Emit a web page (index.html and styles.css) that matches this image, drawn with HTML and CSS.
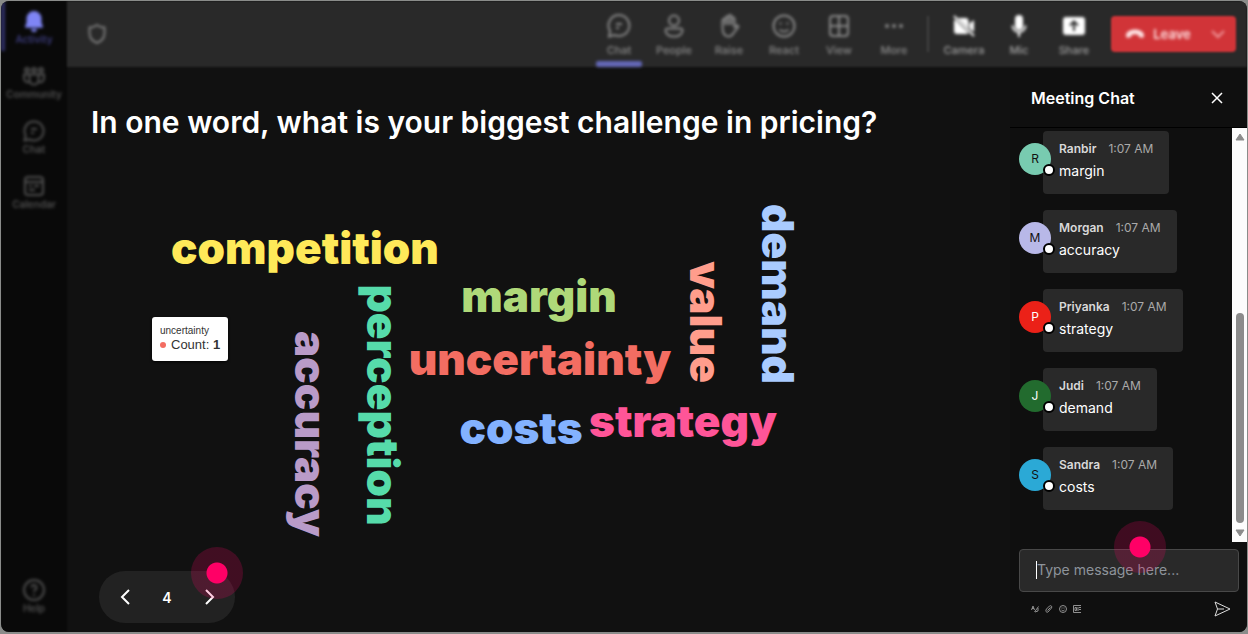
FILE: index.html
```html
<!DOCTYPE html>
<html lang="en">
<head>
    <meta charset="UTF-8">
    <meta name="viewport" content="width=device-width, initial-scale=1.0">
    <title>Meeting</title>
    <link rel="stylesheet" href="styles.css">
</head>
<body>
    <div class="app">
        <nav class="sidebar">
            <a href="#" class="nav-item active">
                <svg width="24" height="24" viewBox="0 0 24 24"><path d="M12 2a7.5 7.5 0 0 0-7.5 7.5v4.3L3 17.6c-.2.6.2 1.2.9 1.2h16.2c.7 0 1.1-.6.9-1.2l-1.5-3.8V9.5A7.5 7.5 0 0 0 12 2zM9 20a3 3 0 0 0 6 0z" fill="currentColor"/></svg>
                <span>Activity</span>
            </a>
            <a href="#" class="nav-item">
                <svg width="24" height="24" viewBox="0 0 24 24" fill="none" stroke="currentColor" stroke-width="2"><circle cx="5" cy="6" r="2"/><circle cx="12" cy="6" r="2"/><circle cx="19" cy="6" r="2"/><path d="M7.5 10.5h9V16a4.500 4.500 0 0 1-9 0zM7 10.500H2V14.500a4 4 0 0 0 5.500 3.500M17 10.500h5V14.500a4 4 0 0 1-5.500 3.500"/></svg>
                <span>Community</span>
            </a>
            <a href="#" class="nav-item">
                <svg width="24" height="24" viewBox="0 0 24 24" fill="none" stroke="currentColor" stroke-width="2"><path d="M12 2.5a9.5 9.5 0 1 1-4.400 17.900L2.500 21.500l1.100-5A9.500 9.500 0 0 1 12 2.500zM9 10h6M9 14h3"/></svg>
                <span>Chat</span>
            </a>
            <a href="#" class="nav-item">
                <svg width="24" height="24" viewBox="0 0 24 24" fill="none" stroke="currentColor" stroke-width="2"><rect x="3" y="3" width="18" height="18" rx="3"/><path d="M3 8h18M7 12h3M12 12h5M7 16h6"/></svg>
                <span>Calendar</span>
            </a>
            <a href="#" class="nav-item help">
                <svg width="24" height="24" viewBox="0 0 24 24" fill="none" stroke="currentColor" stroke-width="2"><circle cx="12" cy="12" r="10"/><path d="M9.500 9.500a2.500 2.500 0 1 1 3.500 2.300c-.7.400-1 .9-1 2.200M12 16v2"/></svg>
                <span>Help</span>
            </a>
        </nav>

        <header class="topbar">
            <svg class="shield" width="24" height="24" viewBox="0 0 24 24" fill="none" stroke="currentColor" stroke-width="2"><path d="M12 3c2 1.600 4.500 2.500 7.500 2.500V11c0 5-2.500 8-7.500 10-5-2-7.500-5-7.500-10V5.500C7.500 5.500 10 4.600 12 3z"/></svg>
            <div class="tools">
                <button type="button" class="tool selected">
                    <svg width="24" height="24" viewBox="0 0 24 24" fill="none" stroke="currentColor" stroke-width="2"><path d="M12 1a10.500 10.500 0 1 1-4.600 20L2 22.500l1.100-5.400A10.500 10.500 0 0 1 12 1zM9 10h6M9 14h3"/></svg>
                    Chat
                </button>
                <button type="button" class="tool">
                    <svg width="24" height="24" viewBox="0 0 24 24" fill="none" stroke="currentColor" stroke-width="2"><circle cx="12" cy="6.500" r="5"/><path d="M5.500 14.500h13a2 2 0 0 1 2 2c0 3.500-3.500 6-8.500 6s-8.500-2.500-8.500-6a2 2 0 0 1 2-2z"/></svg>
                    People
                </button>
                <button type="button" class="tool">
                    <svg width="24" height="24" viewBox="0 0 24 24" fill="none" stroke="currentColor" stroke-width="2"><path d="M5.500 13V6.500a1.500 1.500 0 0 1 3 0V4a1.500 1.500 0 0 1 3 0V2.500a1.500 1.500 0 0 1 3 0V5a1.500 1.500 0 0 1 3 0v8l2.500-1.500c1-.3 1.800.8 1 1.800L16.500 19c-1.300 2.500-2.500 3.500-5 3.500-4 0-6-3.500-6-9.500z"/><path d="M8.500 6v5M11.500 4v7M14.500 5v6"/></svg>
                    Raise
                </button>
                <button type="button" class="tool">
                    <svg width="24" height="24" viewBox="0 0 24 24" fill="none" stroke="currentColor" stroke-width="2"><circle cx="12" cy="12" r="10.500"/><path d="M7.500 15.500c2 2.500 7 2.500 9 0M8.500 8.500v2M15.500 8.500v2"/></svg>
                    React
                </button>
                <button type="button" class="tool">
                    <svg width="24" height="24" viewBox="0 0 24 24" fill="none" stroke="currentColor" stroke-width="2"><rect x="3" y="2" width="18" height="20" rx="3"/><path d="M12 2v20M3 12h18"/></svg>
                    View
                </button>
                <button type="button" class="tool">
                    <svg width="24" height="24" viewBox="0 0 24 24" fill="currentColor"><circle cx="5" cy="12" r="2"/><circle cx="12" cy="12" r="2"/><circle cx="19" cy="12" r="2"/></svg>
                    More
                </button>
            </div>
            <span class="divider"></span>
            <div class="tools devices">
                <button type="button" class="tool">
                    <svg width="24" height="24" viewBox="0 0 24 24" fill="currentColor"><path d="M6 4h7.500a3 3 0 0 1 3 3v7.500zM3 5.500L16.500 19a3 3 0 0 1-2 1H5a3 3 0 0 1-3-3V7c0-.6.400-1.200 1-1.500zM17.500 9.500l4.500-3.500v12l-4.500-3.500z"/><path d="M2 2l20 20" stroke="currentColor" stroke-width="2"/></svg>
                    Camera
                </button>
                <button type="button" class="tool">
                    <svg width="24" height="24" viewBox="0 0 24 24" fill="currentColor"><rect x="8" y="1" width="8" height="15" rx="4"/><path d="M5.500 11.500a6.500 6.500 0 0 0 13 0M12 18v5" fill="none" stroke="currentColor" stroke-width="2"/></svg>
                    Mic
                </button>
                <button type="button" class="tool">
                    <svg width="24" height="24" viewBox="0 0 24 24"><rect x="1" y="3" width="22" height="18" rx="3" fill="currentColor"/><path d="M12 17V8M8 11.500l4-4 4 4" fill="none" stroke="#292929" stroke-width="2"/></svg>
                    Share
                </button>
            </div>
            <button type="button" class="leave">
                <svg width="20" height="20" viewBox="0 0 20 20"><path d="M10 5.500c5 0 9.500 2.500 9 6.500-.2 1.500-1 2-2.300 1.700l-2-.5c-1-.3-1.200-1-1.200-2.200C11.500 10 8.500 10 6.500 11c0 1.200-.2 1.900-1.200 2.200l-2 .5C2 14 1.200 13.500 1 12c-.5-4 4-6.500 9-6.500z" fill="currentColor"/></svg>
                <span>Leave</span>
                <svg class="leave-more" width="14" height="14" viewBox="0 0 14 14" fill="none" stroke="currentColor" stroke-width="2"><path d="M1 4l6 6 6-6"/></svg>
            </button>
        </header>

        <main class="stage">
            <h1>In one word, what is your biggest challenge in pricing?</h1>
            <div class="cloud">
                <svg viewBox="0 0 943 400" preserveAspectRatio="xMinYMin meet">
                    <text x="238" y="94" fill="#ffe959">competition</text>
                    <text x="472" y="142" fill="#afd979">margin</text>
                    <text x="473" y="205" fill="#f36d62">uncertainty</text>
                    <text x="454" y="274" fill="#83b2ff">costs</text>
                    <text x="616" y="267" fill="#ff5598">strategy</text>
                    <text transform="translate(623 152) rotate(90)" fill="#ff9d8c">value</text>
                    <text transform="translate(695 124) rotate(90)" fill="#a9cbff">demand</text>
                    <text transform="translate(300 235) rotate(90)" fill="#56dbaa">perception</text>
                    <text transform="translate(228 264) rotate(90)" fill="#b99bc8">accuracy</text>
                </svg>
                <div class="tooltip">
                    <div class="tooltip-word">uncertainty</div>
                    <div class="tooltip-count"><span class="dot"></span>Count: <b>1</b></div>
                </div>
            </div>
            <div class="pager">
                <button type="button" aria-label="Previous">
                    <svg width="12" height="18" viewBox="0 0 12 18" fill="none" stroke="currentColor" stroke-width="2"><path d="M10 2L3 9l7 7"/></svg>
                </button>
                <span>4</span>
                <button type="button" aria-label="Next">
                    <svg width="12" height="18" viewBox="0 0 12 18" fill="none" stroke="currentColor" stroke-width="2"><path d="M3 2l7 7-7 7"/></svg>
                </button>
                <i class="pulse pulse-next"></i>
            </div>
        </main>

        <aside class="chat">
            <div class="chat-header">
                <h2>Meeting Chat</h2>
                <button type="button" aria-label="Close">
                    <svg width="12" height="12" viewBox="0 0 12 12" fill="none" stroke="currentColor" stroke-width="1.500"><path d="M1 1l10 10M11 1L1 11"/></svg>
                </button>
            </div>
            <div class="chat-body">
                <div class="messages">
                    <div class="message">
                        <div class="avatar mint">R</div>
                        <div class="bubble"><p class="meta"><b>Ranbir</b><time>1:07 AM</time></p><p>margin</p></div>
                    </div>
                    <div class="message">
                        <div class="avatar lilac">M</div>
                        <div class="bubble"><p class="meta"><b>Morgan</b><time>1:07 AM</time></p><p>accuracy</p></div>
                    </div>
                    <div class="message">
                        <div class="avatar red">P</div>
                        <div class="bubble"><p class="meta"><b>Priyanka</b><time>1:07 AM</time></p><p>strategy</p></div>
                    </div>
                    <div class="message">
                        <div class="avatar green">J</div>
                        <div class="bubble"><p class="meta"><b>Judi</b><time>1:07 AM</time></p><p>demand</p></div>
                    </div>
                    <div class="message">
                        <div class="avatar blue">S</div>
                        <div class="bubble"><p class="meta"><b>Sandra</b><time>1:07 AM</time></p><p>costs</p></div>
                    </div>
                </div>
                <div class="scrollbar">
                    <svg width="10" height="8" viewBox="0 0 10 8"><path d="M5 1l4 6H1z" fill="#8b8b8b" stroke="#8b8b8b" stroke-linejoin="round"/></svg>
                    <div class="track"><div class="thumb"></div></div>
                    <svg width="10" height="8" viewBox="0 0 10 8"><path d="M5 7l4-6H1z" fill="#8b8b8b" stroke="#8b8b8b" stroke-linejoin="round"/></svg>
                </div>
            </div>
            <form class="composer">
                <div class="field">
                    <span class="caret"></span>
                    <input type="text" aria-label="Message" placeholder="Type message here...">
                    <i class="pulse pulse-field"></i>
                </div>
                <div class="composer-tools">
                    <button type="button" aria-label="Format">
                        <svg width="8" height="8" viewBox="0 0 8 8" fill="none" stroke="currentColor"><path d="M.5 5l1.500-4 1.500 4M1 3.500h2M7.500 1.500L3.500 7M4 7l3-1V3"/></svg>
                    </button>
                    <button type="button" aria-label="Attach">
                        <svg width="8" height="8" viewBox="0 0 8 8" fill="none" stroke="currentColor"><path d="M2.500 5.500L5.500 2.500M1.500 4l3-3c1.500-1 3 .5 2 2l-3.500 4C1.500 8 0 6 1.500 4z"/></svg>
                    </button>
                    <button type="button" aria-label="Emoji">
                        <svg width="8" height="8" viewBox="0 0 8 8" fill="none" stroke="currentColor"><circle cx="4" cy="4" r="3.500"/><path d="M2.500 5c.8 1 2.200 1 3 0M2.500 3h1M4.500 3h1"/></svg>
                    </button>
                    <button type="button" aria-label="GIF">
                        <svg width="8" height="8" viewBox="0 0 8 8" fill="none" stroke="currentColor"><path d="M8 .5H.5v7H8M2 2.500h1.500v3H2zM5 2v4M6 2.500h2M6 4.500h2"/></svg>
                    </button>
                    <button type="submit" class="send" aria-label="Send">
                        <svg width="17" height="16" viewBox="0 0 17 16" fill="none" stroke="currentColor"><path d="M1 1l15 7-15 7 2.500-7zM3.500 8H10"/></svg>
                    </button>
                </div>
            </form>
        </aside>
    </div>
</body>
</html>
```

FILE: styles.css
```css
* {
    box-sizing: border-box;
}
body {
    font-family: Inter, sans-serif;
    margin: 0;
    padding: 1px 1px 2px;
    height: 100vh;
    background-color: #8a8c8a;
    color: #fff;
}
h1, h2, p {
    margin: 0;
}
button {
    display: flex;
    align-items: center;
    justify-content: center;
    padding: 0;
    border: none;
    background: none;
    color: inherit;
    font-family: inherit;
    cursor: pointer;
}
.app {
    display: grid;
    grid-template-columns: 66px 1fr 237px;
    grid-template-rows: 66px 1fr;
    height: 100%;
    border-radius: 8px;
    background-color: #111;
    overflow: hidden;
}

/* left navigation, out of focus */
.sidebar {
    grid-row: 1 / 3;
    display: flex;
    flex-direction: column;
    gap: 5px;
    padding-bottom: 12px;
    background-color: #090909;
    filter: blur(1px);
}
.nav-item {
    display: flex;
    flex-direction: column;
    align-items: center;
    justify-content: center;
    height: 50px;
    padding-top: 2px;
    color: #505050;
    font-size: 10px;
    font-weight: 600;
    line-height: 12px;
    text-decoration: none;
    filter: blur(1px);
}
.nav-item.active {
    border-left: 4px solid #2f2f66;
    padding-right: 4px;
    color: #3c3c7c;
}
.nav-item.active svg {
    color: #7f85f5;
}
.nav-item.help {
    margin-top: auto;
}

/* meeting toolbar, out of focus */
.topbar {
    grid-column: 2 / 4;
    display: flex;
    align-items: center;
    padding: 0 11px 0 18px;
    background-color: #292929;
    filter: blur(1px);
}
.shield {
    margin-right: auto;
    color: #7c7c7c;
    filter: blur(1px);
}
.tools {
    display: flex;
    align-self: stretch;
    gap: 9px;
}
.tool {
    position: relative;
    flex-direction: column;
    gap: 5px;
    width: 46px;
    padding-top: 3px;
    color: #8a8a8a;
    font-size: 11px;
    font-weight: 500;
    line-height: 14px;
    filter: blur(1px);
}
.tool.selected::after {
    content: "";
    position: absolute;
    left: 0;
    right: 0;
    bottom: 0;
    height: 6px;
    border-radius: 2px;
    background-color: #6468b8;
}
.devices .tool {
    color: #a0a0a0;
}
.devices svg {
    color: #fff;
}
.divider {
    width: 2px;
    height: 36px;
    margin: 0 12px 0 10px;
    background-color: #404040;
}
.leave {
    gap: 8px;
    width: 125px;
    height: 36px;
    margin-left: 14px;
    padding-left: 3px;
    border-radius: 4px;
    background-color: #d13438;
    color: #ffe4e5;
    font-size: 13px;
    font-weight: 600;
}
.leave svg,
.leave span {
    filter: blur(1px);
}
.leave-more {
    margin-left: 12px;
    color: #f09a9e;
}

/* question and word cloud */
.stage {
    display: flex;
    flex-direction: column;
    min-width: 0;
    padding: 37px 0 9px;
}
.stage h1 {
    padding-left: 24px;
    font-size: 30px;
    font-weight: 600;
    line-height: 36px;
    white-space: nowrap;
}
.cloud {
    position: relative;
    flex: 1;
    margin-top: 30px;
}
.cloud svg {
    display: block;
    width: 100%;
}
.cloud text {
    font-size: 44px;
    font-weight: 900;
    text-anchor: middle;
}
.tooltip {
    position: absolute;
    left: 85px;
    top: 147px;
    padding: 8px;
    border-radius: 3px;
    background-color: #fff;
    color: #333;
    font-family: "Liberation Sans", Arial, sans-serif;
    box-shadow: 0 1px 3px #000;
}
.tooltip-word {
    font-size: 10px;
    line-height: 12px;
}
.tooltip-count {
    font-size: 13px;
    line-height: 16px;
}
.dot {
    display: inline-block;
    width: 6px;
    height: 6px;
    margin-right: 5px;
    border-radius: 50%;
    background-color: #f36d62;
    vertical-align: 1px;
}
.pager {
    position: relative;
    display: flex;
    align-items: center;
    justify-content: space-between;
    width: 136px;
    height: 52px;
    margin-left: 32px;
    padding: 0 20px;
    border-radius: 26px;
    background-color: #222;
    font-size: 14px;
    font-weight: 600;
}

/* click marker */
.pulse {
    position: absolute;
    width: 52px;
    height: 52px;
    border-radius: 50%;
    background: radial-gradient(circle, #ff0066 10px, rgba(255, 0, 102, 0.2) 11px);
    pointer-events: none;
}
.pulse-next {
    left: 92px;
    top: -24px;
}
.pulse-field {
    left: 94px;
    top: -29px;
}

/* chat panel */
.chat {
    display: flex;
    flex-direction: column;
    min-height: 0;
    background-color: #0f0f0f;
}
.chat-header {
    display: flex;
    align-items: center;
    justify-content: space-between;
    height: 61px;
    padding: 2px 24px 0 21px;
    border-bottom: 1px solid #000;
}
.chat-header h2 {
    font-size: 16px;
    font-weight: 600;
}
.chat-body {
    display: flex;
    flex: 1;
    min-height: 0;
}
.messages {
    display: flex;
    flex: 1;
    flex-direction: column;
    gap: 16px;
    padding: 3px 9px;
    overflow: hidden;
}
.message {
    display: flex;
    align-items: flex-start;
}
.avatar {
    position: relative;
    width: 32px;
    height: 32px;
    margin: 12px -8px 0 0;
    border-radius: 50%;
    color: #111;
    font-size: 12px;
    line-height: 32px;
    text-align: center;
}
.avatar::after {
    content: "";
    position: absolute;
    right: -4px;
    bottom: -1px;
    box-sizing: border-box;
    width: 12px;
    height: 12px;
    border: 2px solid #000;
    border-radius: 50%;
    background-color: #fff;
}
.mint { background-color: #78cbb0; }
.lilac { background-color: #b8b8e8; }
.red { background-color: #eb2118; color: #fff; }
.green { background-color: #226b2e; color: #fff; }
.blue { background-color: #2ba9d6; }
.bubble {
    padding: 8px 16px 11px;
    border-radius: 4px;
    background-color: #292929;
    font-size: 14px;
    line-height: 24px;
}
.meta {
    display: flex;
    gap: 12px;
    color: #aaa;
    font-size: 12px;
    line-height: 20px;
}
.meta b {
    color: #d8d8d8;
    font-weight: 600;
}
.scrollbar {
    display: flex;
    flex-direction: column;
    align-items: center;
    width: 15px;
    padding: 5px 0;
    background-color: #fcfcfc;
}
.track {
    display: flex;
    flex: 1;
    align-items: flex-end;
    padding-bottom: 6px;
}
.thumb {
    width: 8px;
    height: 55%;
    border-radius: 4px;
    background-color: #8b8b8b;
}
.composer {
    padding: 7px 8px 15px 9px;
}
.field {
    position: relative;
    display: flex;
    align-items: center;
    height: 43px;
    padding: 0 16px 2px;
    border: 1px solid #484848;
    border-radius: 4px;
    background-color: #292929;
}
.caret {
    width: 1px;
    height: 18px;
    background-color: #fff;
}
.field input {
    flex: 1;
    min-width: 0;
    padding: 0;
    border: none;
    outline: none;
    background: none;
    color: #fff;
    font-family: inherit;
    font-size: 14px;
}
.field input::placeholder {
    color: #8e949b;
}
.composer-tools {
    display: flex;
    align-items: center;
    gap: 6px;
    padding: 9px 8px 0 12px;
    color: #909090;
}
.composer-tools .send {
    margin-left: auto;
    color: #ddd;
}
```
